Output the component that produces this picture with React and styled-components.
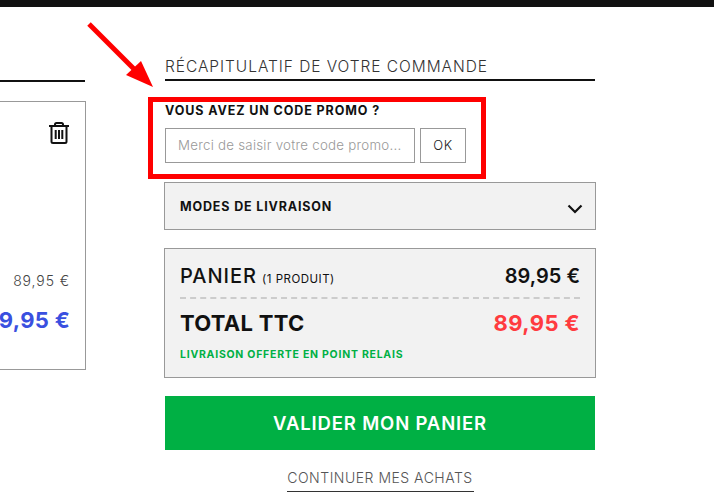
import React from "react";
import styled, { createGlobalStyle } from "styled-components";

const Global = createGlobalStyle`
  html, body { margin: 0; padding: 0; background: #fff; }
  body { font-family: Inter, "Liberation Sans", sans-serif; color: #111; overflow: hidden; }
`;
const Page = styled.div`
  position: relative;
  width: 714px;
  height: 501px;
  overflow: hidden;
`;
const TopBar = styled.div`
  height: 7px;
  background: #111;
`;
const Columns = styled.div`
  display: flex;
  gap: 79px;
  align-items: flex-start;
  padding-top: 48px;
`;
const LeftCol = styled.div`
  width: 86px;
  flex: none;
  overflow: hidden;
`;
const LeftRule = styled.div`
  height: 2px;
  margin: 25px 1px 0 0;
  background: #111;
`;
const ProductCard = styled.div`
  box-sizing: border-box;
  height: 269px;
  margin: 19px 0 0 -10px;
  border: 1px solid #999;
  padding: 19px 15px 0 0;
  display: flex;
  flex-direction: column;
  align-items: flex-end;
`;
const TrashIcon = styled.svg`
  width: 22px;
  height: 24px;
`;
const OldPrice = styled.div`
  margin-top: 127px;
  font-size: 14px;
  font-weight: 300;
  color: #444;
  white-space: nowrap;
  letter-spacing: 0.9px;
`;
const BluePrice = styled.div`
  margin-top: 18px;
  font-size: 22px;
  font-weight: 700;
  color: #3a50e0;
  white-space: nowrap;
  letter-spacing: 0.3px;
`;
const RightCol = styled.div`
  width: 430px;
  flex: none;
  display: flex;
  flex-direction: column;
  align-items: stretch;
`;
const Title = styled.div`
  height: 24px;
  line-height: 24px;
  font-size: 15.5px;
  font-weight: 300;
  color: #333;
  letter-spacing: 0.95px;
  white-space: nowrap;
  border-bottom: 2px solid #111;
`;
const PromoLabel = styled.div`
  margin-top: 21px;
  height: 18px;
  line-height: 18px;
  font-size: 12.5px;
  font-weight: 700;
  color: #111;
  letter-spacing: 0.9px;
`;
const PromoRow = styled.div`
  display: flex;
  gap: 5px;
  margin-top: 8px;
`;
const PromoInput = styled.div`
  box-sizing: border-box;
  width: 250px;
  height: 35px;
  border: 1px solid #999;
  padding-left: 12px;
  line-height: 33px;
  font-size: 13.3px;
  font-weight: 300;
  color: #999;
  white-space: nowrap;
  letter-spacing: 0.25px;
`;
const OkButton = styled.div`
  box-sizing: border-box;
  width: 46px;
  height: 35px;
  border: 1px solid #999;
  text-align: center;
  line-height: 33px;
  font-size: 13px;
  font-weight: 300;
  letter-spacing: 0.6px;
  color: #222;
`;
const Shipping = styled.div`
  box-sizing: border-box;
  margin: 19px -1px 0;
  height: 48px;
  background: #f2f2f2;
  border: 1px solid #999;
  padding: 0 12px 0 15px;
  display: flex;
  align-items: center;
  justify-content: space-between;
  font-size: 12.5px;
  font-weight: 700;
  letter-spacing: 0.85px;
`;
const ChevronIcon = styled.svg`
  width: 16px;
  height: 10px;
  margin: 5px 0 0;
`;
const Summary = styled.div`
  box-sizing: border-box;
  margin: 18px -1px 0;
  height: 130px;
  background: #f2f2f2;
  border: 1px solid #999;
  padding: 14px 15px 0;
`;
const SummaryRow = styled.div`
  display: flex;
  justify-content: space-between;
  align-items: baseline;
  white-space: nowrap;
`;
const BasketRow = styled(SummaryRow)`
  height: 34px;
  line-height: 26px;
  font-size: 20px;
  font-weight: 500;
  letter-spacing: 1px;
  border-bottom: 2px dashed #ccc;
`;
const Small = styled.span`
  font-size: 11.5px;
  font-weight: 400;
  margin-left: 5px;
  letter-spacing: 0.5px;
`;
const Amount = styled.span`
  font-size: 20px;
  font-weight: 600;
  letter-spacing: 0;
`;
const TotalRow = styled(SummaryRow)`
  margin-top: 10px;
  line-height: 28px;
  font-size: 22px;
  font-weight: 700;
  letter-spacing: 0.3px;
`;
const TotalAmount = styled.span`
  font-size: 22px;
  font-weight: 700;
  color: #ff3b3f;
  letter-spacing: 0.4px;
`;
const Offer = styled.div`
  margin-top: 11px;
  font-size: 10.5px;
  line-height: 14px;
  font-weight: 700;
  color: #00b044;
  letter-spacing: 0.75px;
`;
const Validate = styled.div`
  margin-top: 18px;
  height: 54px;
  line-height: 54px;
  background: #00b044;
  color: #fff;
  text-align: center;
  font-size: 18.5px;
  font-weight: 600;
  letter-spacing: 0.85px;
`;
const ContinueLink = styled.div`
  align-self: center;
  margin-top: 18px;
  height: 23px;
  line-height: 19px;
  width: 187px;
  text-align: center;
  white-space: nowrap;
  font-size: 14px;
  font-weight: 300;
  color: #555;
  letter-spacing: 0.5px;
  border-bottom: 1px solid #333;
`;
const Highlight = styled.div`
  position: absolute;
  left: 148px;
  top: 97px;
  width: 338px;
  height: 82px;
  box-sizing: border-box;
  border: 5px solid #f00;
  pointer-events: none;
`;
const Arrow = styled.svg`
  position: absolute;
  left: 85px;
  top: 20px;
  width: 72px;
  height: 70px;
`;

export default function App() {
  return (
    <Page>
      <Global />
      <TopBar />
      <Columns>
        <LeftCol>
          <LeftRule />
          <ProductCard>
            <TrashIcon viewBox="0 0 22 24" fill="none" stroke="#111" strokeWidth="2">
              <path d="M1 5h20M7 5V3.5a1.5 1.5 0 0 1 1.5-1.5h5a1.5 1.5 0 0 1 1.5 1.5V5" />
              <path d="M3.5 5v15.5a1.5 1.5 0 0 0 1.5 1.5h12a1.5 1.5 0 0 0 1.5-1.5V5" />
              <path d="M7.7 9v9M11 9v9M14.3 9v9" />
            </TrashIcon>
            <OldPrice>89,95 €</OldPrice>
            <BluePrice>89,95 €</BluePrice>
          </ProductCard>
        </LeftCol>
        <RightCol>
          <Title>RÉCAPITULATIF DE VOTRE COMMANDE</Title>
          <PromoLabel>VOUS AVEZ UN CODE PROMO ?</PromoLabel>
          <PromoRow>
            <PromoInput>Merci de saisir votre code promo...</PromoInput>
            <OkButton>OK</OkButton>
          </PromoRow>
          <Shipping>
            MODES DE LIVRAISON
            <ChevronIcon viewBox="0 0 16 10" fill="none" stroke="#111" strokeWidth="2.2">
              <path d="M1.5 1.5L8 8L14.5 1.5" />
            </ChevronIcon>
          </Shipping>
          <Summary>
            <BasketRow>
              <span>PANIER<Small>(1 PRODUIT)</Small></span>
              <Amount>89,95 €</Amount>
            </BasketRow>
            <TotalRow>
              <span>TOTAL TTC</span>
              <TotalAmount>89,95 €</TotalAmount>
            </TotalRow>
            <Offer>LIVRAISON OFFERTE EN POINT RELAIS</Offer>
          </Summary>
          <Validate>VALIDER MON PANIER</Validate>
          <ContinueLink>CONTINUER MES ACHATS</ContinueLink>
        </RightCol>
      </Columns>
      <Highlight />
      <Arrow viewBox="0 0 72 70">
        <path d="M4 4L55 55" stroke="#f00" strokeWidth="5" fill="none" />
        <path d="M68 67L41 55L56 41Z" fill="#f00" />
      </Arrow>
    </Page>
  );
}
